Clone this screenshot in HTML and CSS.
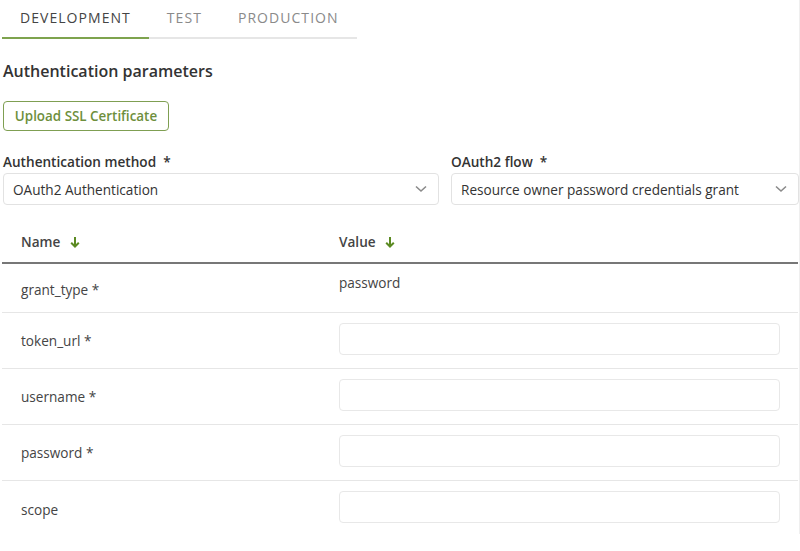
FILE: index.html
```html
<!DOCTYPE html>
<html>
<head>
<meta charset="utf-8">
<link rel="stylesheet" href="styles.css">
</head>
<body>
<div class="page">
  <div class="tabs">
    <div class="tab active">DEVELOPMENT</div>
    <div class="tab">TEST</div>
    <div class="tab">PRODUCTION</div>
  </div>

  <h2 class="heading">Authentication parameters</h2>

  <button class="upload-btn">Upload SSL Certificate</button>

  <div class="fields">
    <div class="field">
      <label class="label">Authentication method&nbsp; *</label>
      <div class="select">
        <span>OAuth2 Authentication</span>
        <svg class="chev" width="12" height="8" viewBox="0 0 12 8"><path d="M1 1.5 L6 6 L11 1.5" fill="none" stroke="#8a8a8a" stroke-width="1.6"/></svg>
      </div>
    </div>
    <div class="field">
      <label class="label">OAuth2 flow&nbsp; *</label>
      <div class="select">
        <span>Resource owner password credentials grant</span>
        <svg class="chev" width="12" height="8" viewBox="0 0 12 8"><path d="M1 1.5 L6 6 L11 1.5" fill="none" stroke="#8a8a8a" stroke-width="1.6"/></svg>
      </div>
    </div>
  </div>

  <div class="table">
    <div class="row head">
      <div class="cell">Name <svg class="sort" width="10" height="12" viewBox="0 0 10 12"><path d="M5 1 V10.5 M1.2 6.8 L5 10.5 L8.8 6.8" fill="none" stroke="#5b8a22" stroke-width="2"/></svg></div>
      <div class="cell">Value <svg class="sort" width="10" height="12" viewBox="0 0 10 12"><path d="M5 1 V10.5 M1.2 6.8 L5 10.5 L8.8 6.8" fill="none" stroke="#5b8a22" stroke-width="2"/></svg></div>
    </div>
    <div class="row first">
      <div class="cell name">grant_type *</div>
      <div class="cell value-text">password</div>
    </div>
    <div class="row">
      <div class="cell name">token_url *</div>
      <div class="cell field-cell"><div class="input"></div></div>
    </div>
    <div class="row">
      <div class="cell name">username *</div>
      <div class="cell field-cell"><div class="input"></div></div>
    </div>
    <div class="row">
      <div class="cell name">password *</div>
      <div class="cell field-cell"><div class="input"></div></div>
    </div>
    <div class="row last">
      <div class="cell name">scope</div>
      <div class="cell field-cell"><div class="input"></div></div>
    </div>
  </div>
</div>
</body>
</html>
```

FILE: styles.css
```css
* { box-sizing: border-box; }

html, body {
  margin: 0;
  padding: 0;
  background: #fff;
}

body {
  font-family: "Open Sans", "Noto Sans", sans-serif;
  color: #444;
  font-size: 13.6px;
}

.page {
  width: 800px;
  height: 534px;
  padding: 0 0 0 2px;
  border-right: 1px solid #efefef;
}

.tabs {
  display: flex;
  width: 355px;
  border-bottom: 2px solid #e6e6e6;
}

.tab {
  padding: 9px 18px 10px;
  font-size: 14px;
  letter-spacing: 1.05px;
  color: #8a8a8a;
  line-height: 18px;
  margin-bottom: -2px;
  border-bottom: 2px solid transparent;
}

.tab.active {
  color: #444;
  border-bottom-color: #7ea34e;
}

.heading {
  margin: 0;
  padding: 21px 0 0 1px;
  font-size: 16px;
  font-weight: 600;
  line-height: 22px;
  color: #333;
}

.upload-btn {
  display: block;
  margin: 19px 0 0 1px;
  height: 30px;
  width: 166px;
  padding: 0;
  border: 1.5px solid #7f9f52;
  border-radius: 4px;
  background: #fff;
  color: #6e8f3c;
  font-family: inherit;
  font-size: 13.4px;
  font-weight: 600;
}

.fields {
  display: grid;
  grid-template-columns: 436px 348px;
  gap: 12px;
  margin: 22px 0 0 1px;
}

.label {
  display: block;
  font-size: 13.6px;
  font-weight: 600;
  color: #333;
  line-height: 18px;
  margin-bottom: 2px;
}

.select {
  display: flex;
  align-items: center;
  justify-content: space-between;
  height: 32px;
  border: 1px solid #e2e2e2;
  border-radius: 4px;
  padding: 0 11px 0 9px;
  color: #333;
  font-size: 13.6px;
}

.chev { display: block; }

.table {
  margin-top: 15px;
  width: 796px;
}

.row {
  display: grid;
  grid-template-columns: 337px 1fr;
  border-bottom: 1px solid #e6e6e6;
  height: 56px;
  align-items: center;
}

.row.head {
  height: 44px;
  border-bottom: 2px solid #777;
  font-weight: 600;
  color: #444;
  padding-top: 1px;
}

.row.first {
  height: 49px;
}

.row.last {
  border-bottom: none;
}

.cell {
  padding-left: 19px;
  font-size: 13.6px;
}

.row .cell:nth-child(2) {
  padding-left: 0;
  padding-right: 18px;
}

.field-cell {
  align-self: start;
  padding-top: 10px;
}

.sort {
  vertical-align: -1px;
  margin-left: 6px;
}

.value-text {
  align-self: start;
  padding-top: 9px;
}

.row.first .name { padding-top: 2px; }

.input {
  height: 32px;
  border: 1.5px solid #e8e8e8;
  border-radius: 4px;
}
```
